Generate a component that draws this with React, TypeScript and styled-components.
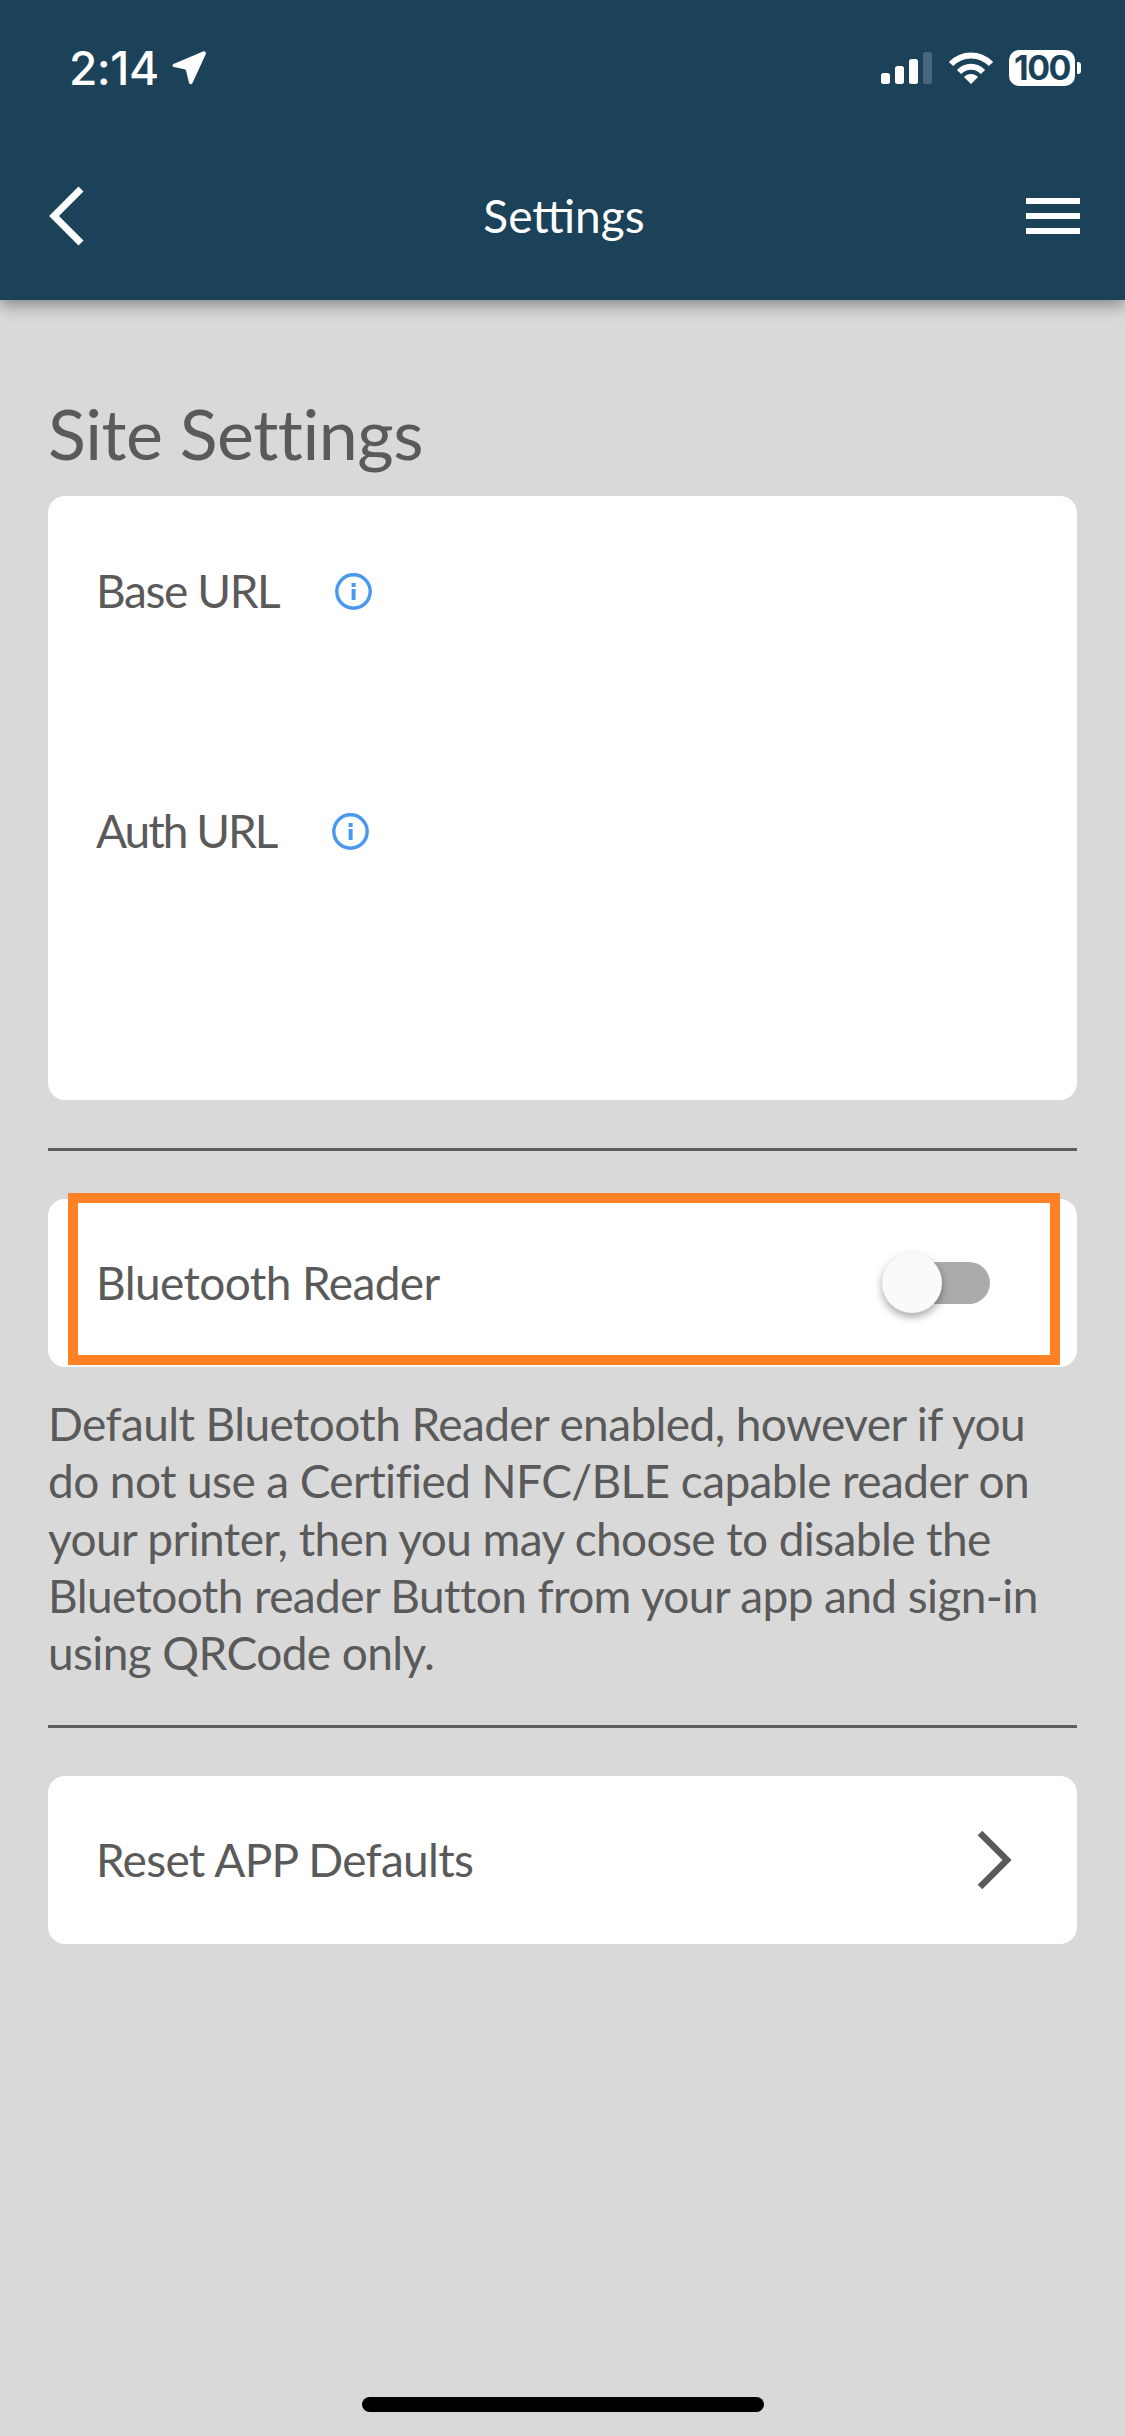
import React from "react";
import styled, { createGlobalStyle } from "styled-components";

const Global = createGlobalStyle`
  html, body { margin: 0; padding: 0; background: #d9d9d9; }
  * { box-sizing: border-box; }
`;

const Page = styled.div`
  width: 1125px;
  height: 2436px;
  background: #d9d9d9;
  font-family: "Lato", "Noto Sans", sans-serif;
  color: #5a5a5a;
  display: flex;
  flex-direction: column;
  overflow: hidden;
  position: relative;
`;

const Header = styled.header`
  height: 300px;
  background: #1c4259;
  box-shadow: 0 6px 14px rgba(0, 0, 0, 0.35);
  color: #fff;
  position: relative;
  flex: none;
`;

const StatusBar = styled.div`
  height: 126px;
  padding: 40px 44px 0 69px;
  display: flex;
  justify-content: space-between;
  align-items: flex-start;
`;

const Clock = styled.div`
  display: flex;
  align-items: center;
  gap: 13px;
  font-family: "Inter", sans-serif;
  font-weight: 500;
  font-size: 46px;
  line-height: 56px;
  letter-spacing: -0.5px;
`;

const StatusIcons = styled.div`
  display: flex;
  align-items: center;
  gap: 15px;
  height: 56px;
`;

const NavBar = styled.div`
  height: 174px;
  padding: 6px 45px 0 48px;
  display: grid;
  grid-template-columns: 1fr auto 1fr;
  align-items: center;
`;

const NavTitle = styled.h1`
  margin: 0;
  font-size: 46px;
  font-weight: 400;
  line-height: 60px;
`;

const Content = styled.main`
  padding: 0 48px;
  display: flex;
  flex-direction: column;
`;

const PageTitle = styled.h2`
  margin: 89px 0 0;
  font-size: 70px;
  line-height: 88px;
  font-weight: 400;
  letter-spacing: -0.5px;
  color: #5a5a5a;
`;

const Card = styled.section<{ $h: number }>`
  background: #fff;
  border-radius: 17px;
  height: ${(p) => p.$h}px;
  position: relative;
`;

const SiteCard = styled(Card)`
  margin-top: 19px;
  padding: 65px 48px 0;
  display: flex;
  flex-direction: column;
  gap: 180px;
`;

const LabelRow = styled.div`
  display: flex;
  align-items: center;
  height: 60px;
  gap: 56px;
`;

const Label = styled.span<{ $spacing?: number }>`
  font-size: 46px;
  line-height: 60px;
  letter-spacing: ${(p) => p.$spacing ?? -0.6}px;
`;

const Rule = styled.hr<{ $top: number }>`
  margin: ${(p) => p.$top}px 0 0;
  border: 0;
  height: 3px;
  background: #5e5e5e;
`;

const RowCard = styled(Card)<{ $top: number }>`
  margin-top: ${(p) => p.$top}px;
  padding: 0 42px 0 48px;
  display: flex;
  align-items: center;
  justify-content: space-between;
`;

const Highlight = styled.div`
  position: absolute;
  left: 20px;
  right: 17px;
  top: -6px;
  bottom: 2px;
  border: 10px solid #ff8025;
`;

const Toggle = styled.div`
  position: relative;
  width: 108px;
  height: 42px;
  margin-right: 45px;
`;

const Track = styled.div`
  position: absolute;
  left: 30px;
  right: 0;
  top: 0;
  bottom: 0;
  border-radius: 21px;
  background: #ababab;
`;

const Knob = styled.div`
  position: absolute;
  left: 0;
  top: -9px;
  width: 60px;
  height: 60px;
  border-radius: 50%;
  background: #fafafa;
  box-shadow: 0 4px 9px rgba(0, 0, 0, 0.35);
`;

const Description = styled.p`
  margin: 28px 0 0;
  font-size: 46px;
  line-height: 57.3px;
  letter-spacing: -0.6px;
  white-space: pre-line;
`;

const HomeIndicator = styled.div`
  position: absolute;
  left: 362px;
  bottom: 24px;
  width: 402px;
  height: 15px;
  border-radius: 8px;
  background: #000;
`;

const InfoIcon = () => (
  <svg width="37" height="37" viewBox="0 0 37 37" fill="none" aria-hidden="true">
    <circle cx="18.5" cy="18.5" r="16.7" stroke="#4a98ee" strokeWidth="3.4" />
    <rect x="16.6" y="16" width="4" height="11" fill="#4a98ee" />
    <rect x="16.6" y="10" width="4" height="4" fill="#4a98ee" />
  </svg>
);

const Arrow = () => (
  <svg width="34" height="35" viewBox="0 0 34 35" aria-hidden="true">
    <path
      d="M1.500 13 31 .5c2-.8 3.500 1 2.700 2.700L20.500 32c-.8 1.700-3 1.500-3.500-.3L14 19.500c-.2-.8-.7-1.200-1.400-1.300L2 16C0 15.500 0 13.700 1.500 13z"
      fill="#fff"
    />
  </svg>
);

const Signal = () => (
  <svg width="52" height="34" viewBox="0 0 52 34" aria-hidden="true">
    <rect x="0" y="22" width="9" height="11" rx="2.5" fill="#fff" />
    <rect x="14" y="15" width="9" height="18" rx="2.5" fill="#fff" />
    <rect x="28" y="8" width="9" height="25" rx="2.5" fill="#fff" />
    <rect x="42" y="1" width="9" height="32" rx="2.5" fill="#fff" opacity="0.2" />
  </svg>
);

const Wifi = () => (
  <svg width="46" height="34" viewBox="0 0 46 34" aria-hidden="true">
    <path d="M3 13C14 1.500 32 1.500 43 13" fill="none" stroke="#fff" strokeWidth="6" />
    <path d="M11 21c7-7 17-7 24 0" fill="none" stroke="#fff" strokeWidth="6" />
    <path d="M16 26c4-4 10-4 14 0l-7 7z" fill="#fff" />
  </svg>
);

const BatteryWrap = styled.div`
  display: flex;
  align-items: center;
  gap: 2px;
`;

const BatteryBody = styled.div`
  width: 66px;
  height: 36px;
  border-radius: 10px;
  background: #fff;
  color: #1c4259;
  font-family: "Inter", sans-serif;
  font-weight: 700;
  font-size: 34px;
  line-height: 36px;
  text-align: center;
  letter-spacing: -1.5px;
`;

const BatteryCap = styled.div`
  width: 4px;
  height: 12px;
  border-radius: 0 3px 3px 0;
  background: #fff;
`;

const BackSvg = styled.svg`
  justify-self: start;
`;

const Back = () => (
  <BackSvg width="36" height="60" viewBox="0 0 36 60" aria-hidden="true">
    <path d="M33 3 6 30l27 27" fill="none" stroke="#fff" strokeWidth="7" />
  </BackSvg>
);

const MenuIcon = styled.div`
  justify-self: end;
  width: 54px;
  height: 36px;
  border-top: 6px solid #fff;
  border-bottom: 6px solid #fff;
  position: relative;
  &::after {
    content: "";
    position: absolute;
    left: 0;
    right: 0;
    top: 9px;
    height: 6px;
    background: #fff;
  }
`;

const ForwardSvg = styled.svg`
  margin-right: 22px;
`;

const Forward = () => (
  <ForwardSvg width="36" height="60" viewBox="0 0 36 60" aria-hidden="true">
    <path d="M3 3l27 27L3 57" fill="none" stroke="#5a5a5a" strokeWidth="6.500" />
  </ForwardSvg>
);

export default function App() {
  return (
    <Page>
      <Global />
      <Header>
        <StatusBar>
          <Clock>
            2:14
            <Arrow />
          </Clock>
          <StatusIcons>
            <Signal />
            <Wifi />
            <BatteryWrap>
              <BatteryBody>100</BatteryBody>
              <BatteryCap />
            </BatteryWrap>
          </StatusIcons>
        </StatusBar>
        <NavBar>
          <Back />
          <NavTitle>Settings</NavTitle>
          <MenuIcon />
        </NavBar>
      </Header>
      <Content>
        <PageTitle>Site Settings</PageTitle>
        <SiteCard $h={604}>
          <LabelRow>
            <Label $spacing={-1.4}>Base URL</Label>
            <InfoIcon />
          </LabelRow>
          <LabelRow>
            <Label $spacing={-2}>Auth URL</Label>
            <InfoIcon />
          </LabelRow>
        </SiteCard>
        <Rule $top={48} />
        <RowCard $top={48} $h={168}>
          <Label>Bluetooth Reader</Label>
          <Toggle>
            <Track />
            <Knob />
          </Toggle>
          <Highlight />
        </RowCard>
        <Description>
          {"Default Bluetooth Reader enabled, however if you\ndo not use a Certified NFC/BLE capable reader on\nyour printer, then you may choose to disable the\nBluetooth reader Button from your app and sign-in\nusing QRCode only."}
        </Description>
        <Rule $top={44} />
        <RowCard $top={48} $h={168}>
          <Label $spacing={-0.7}>Reset APP Defaults</Label>
          <Forward />
        </RowCard>
      </Content>
      <HomeIndicator />
    </Page>
  );
}
